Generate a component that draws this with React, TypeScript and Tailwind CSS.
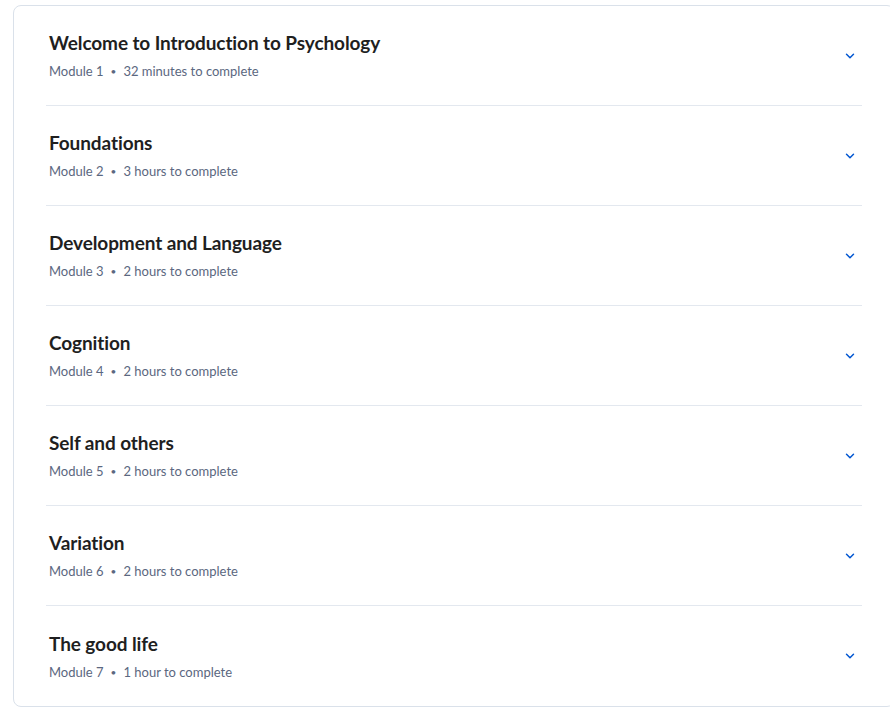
import React from 'react';
import { ChevronDown } from 'lucide-react';

type Module = { title: string; module: string; duration: string };

const modules: Module[] = [
    { title: 'Welcome to Introduction to Psychology', module: 'Module 1', duration: '32 minutes to complete' },
    { title: 'Foundations', module: 'Module 2', duration: '3 hours to complete' },
    { title: 'Development and Language', module: 'Module 3', duration: '2 hours to complete' },
    { title: 'Cognition', module: 'Module 4', duration: '2 hours to complete' },
    { title: 'Self and others', module: 'Module 5', duration: '2 hours to complete' },
    { title: 'Variation', module: 'Module 6', duration: '2 hours to complete' },
    { title: 'The good life', module: 'Module 7', duration: '1 hour to complete' },
];

const ModuleRow: React.FC<{ item: Module; last: boolean }> = ({ item, last }) => (
    <div className={`h-[100px] mx-[32px] flex items-center justify-between ${last ? '' : 'border-b border-[#e3e8ef]'}`}>
        <div className="pl-[3px] flex flex-col gap-[7px]">
            <h3 className="text-[19px] leading-[24px] font-bold text-[#1f1f1f] tracking-[-0.1px]">{item.title}</h3>
            <div className="flex items-center text-[13px] leading-[18px] text-[#5b6780]">
                <span>{item.module}</span>
                <span className="mx-[7px] text-[10px]">•</span>
                <span>{item.duration}</span>
            </div>
        </div>
        <button className="w-[24px] h-[24px] flex items-center justify-center text-[#0056d2]">
            <ChevronDown className="w-[14px] h-[14px]" strokeWidth={2.5} />
        </button>
    </div>
);

export default function App() {
    return (
        <div className="w-[890px] h-[707px] overflow-hidden bg-white" style={{ fontFamily: '"Source Sans Pro", Lato, "Noto Sans", sans-serif' }}>
            <div className="mt-[5px] ml-[13px] w-[882px] border border-[#dae1ea] rounded-[8px]">
                {modules.map((m, i) => (
                    <ModuleRow key={m.module} item={m} last={i === modules.length - 1} />
                ))}
            </div>
        </div>
    );
}
